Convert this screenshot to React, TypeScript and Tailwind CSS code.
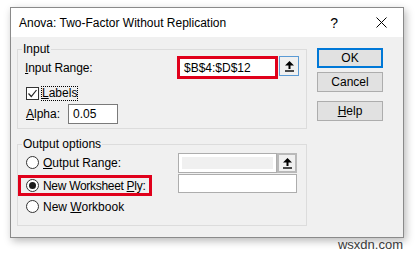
import React from "react"

function UpIcon() {
  return (
    <svg width="11" height="12" viewBox="0 0 11 12">
      <path d="M5.5 1 L10 5.5 H6.5 V9 H4.5 V5.5 H1 Z" fill="#000" />
      <rect x="1" y="10.3" width="9" height="1.4" fill="#000" />
    </svg>
  )
}

function Radio({ checked = false }: { checked?: boolean }) {
  return (
    <span className="w-[13px] h-[13px] rounded-full border border-[#333] bg-white flex items-center justify-center shrink-0">
      {checked && <span className="w-[7px] h-[7px] rounded-full bg-[#1a1a1a]" />}
    </span>
  )
}

export default function App() {
  return (
    <div className="relative w-[415px] h-[256px] overflow-hidden bg-white pl-[10px] pt-[7px] font-['Liberation_Sans',sans-serif] text-[12px] leading-[16px] text-black whitespace-nowrap">
      <div className="w-[394px] h-[231px] flex flex-col border border-[#8a8a8a] bg-[#f0f0f0] shadow-[2px_3px_8px_rgba(0,0,0,0.28)]">
        {/* Title bar */}
        <div className="h-[29px] bg-white flex items-center pl-[8px] pr-[16px] shrink-0">
          <span>Anova: Two-Factor Without Replication</span>
          <span className="ml-auto text-[14px]">?</span>
          <svg className="ml-[38px]" width="11" height="11" viewBox="0 0 11 11">
            <path d="M0.5 0.5 L10.5 10.5 M10.5 0.5 L0.5 10.5" stroke="#000" strokeWidth="1" />
          </svg>
        </div>

        {/* Body */}
        <div className="flex flex-1 pl-[6px]">
          <div className="w-[290px]">
            {/* Input group */}
            <fieldset className="mt-[5px] border border-[#dcdcdc] px-0 pb-[4px]">
              <legend className="ml-[4px] px-[1px] leading-[14px]">Input</legend>
              <div className="flex items-center h-[23px] pl-[7px]">
                <span className="tracking-[-0.1px]">
                  <u>I</u>nput Range:
                </span>
                <div className="ml-auto w-[101px] h-[23px] border-[3px] border-[#e0001b] bg-white flex items-center pl-[4px]">
                  $B$4:$D$12
                </div>
                <div className="self-start ml-[1px] mr-[7px] w-[20px] h-[20px] border border-[#5b9bd5] bg-[#f0f0f0] flex items-center justify-center">
                  <UpIcon />
                </div>
              </div>
              <div className="flex items-center h-[16px] mt-[6px] pl-[8px]">
                <span className="w-[13px] h-[13px] border border-[#333] bg-white flex items-center justify-center">
                  <svg width="11" height="11" viewBox="0 0 11 11">
                    <path d="M1.5 5.5 L4.3 8.5 L9.5 2" stroke="#222" strokeWidth="1.2" fill="none" />
                  </svg>
                </span>
                <span className="ml-[2px] border border-dotted border-black leading-[13px]">
                  <u>L</u>abels
                </span>
              </div>
              <div className="flex items-center h-[20px] mt-[3px] pl-[8px]">
                <span className="w-[42px]">
                  <u>A</u>lpha:
                </span>
                <div className="w-[50px] h-[20px] border border-[#7a7a7a] bg-white flex items-center pl-[4px]">0.05</div>
              </div>
            </fieldset>

            {/* Output options group */}
            <fieldset className="mt-[8px] border border-[#dcdcdc] px-0 pb-[8px]">
              <legend className="ml-[4px] px-[1px] leading-[14px]">Output options</legend>
              <div className="flex">
                <div className="w-[160px]">
                  <div className="flex items-center h-[21px] mt-[1px] pl-[8px]">
                    <Radio />
                    <span className="ml-[4px]">
                      <u>O</u>utput Range:
                    </span>
                  </div>
                  <div className="flex items-center h-[21px] w-[134px] mt-[2px] border-[3px] border-[#e0001b] pl-[5px]">
                    <Radio checked />
                    <span className="ml-[4px] tracking-[-0.3px]">
                      New Worksheet <u>P</u>ly:
                    </span>
                  </div>
                  <div className="flex items-center h-[21px] pl-[8px]">
                    <Radio />
                    <span className="ml-[4px]">
                      New <u>W</u>orkbook
                    </span>
                  </div>
                </div>
                <div className="mt-[2px] flex flex-col">
                  <div className="flex">
                    <div className="w-[99px] h-[20px] border border-[#adadad] bg-white p-[3px]">
                      <div className="w-full h-full bg-[#f0f0f0]" />
                    </div>
                    <div className="w-[20px] h-[20px] border-2 border-[#b9b9b9] bg-[#f0f0f0] flex items-center justify-center">
                      <UpIcon />
                    </div>
                  </div>
                  <div className="w-[119px] h-[19px] mt-[1px] border border-[#adadad] bg-white" />
                </div>
              </div>
            </fieldset>
          </div>

          {/* Buttons */}
          <div className="ml-[10px] pt-[11px] flex flex-col">
            <div className="w-[66px] h-[20px] border-2 border-[#0078d7] bg-[#e1e1e1] flex items-center justify-center">OK</div>
            <div className="w-[66px] h-[20px] mt-[4px] border border-[#adadad] bg-[#e1e1e1] flex items-center justify-center">Cancel</div>
            <div className="w-[66px] h-[20px] mt-[9px] border border-[#adadad] bg-[#e1e1e1] flex items-center justify-center">
              <span>
                <u>H</u>elp
              </span>
            </div>
          </div>
        </div>
      </div>

      {/* Watermark */}
      <div className="absolute right-[12px] top-[237px] font-['Liberation_Sans',sans-serif] text-[13px] leading-[16px] text-[#3a3a3a]">
        wsxdn.com
      </div>
    </div>
  )
}
